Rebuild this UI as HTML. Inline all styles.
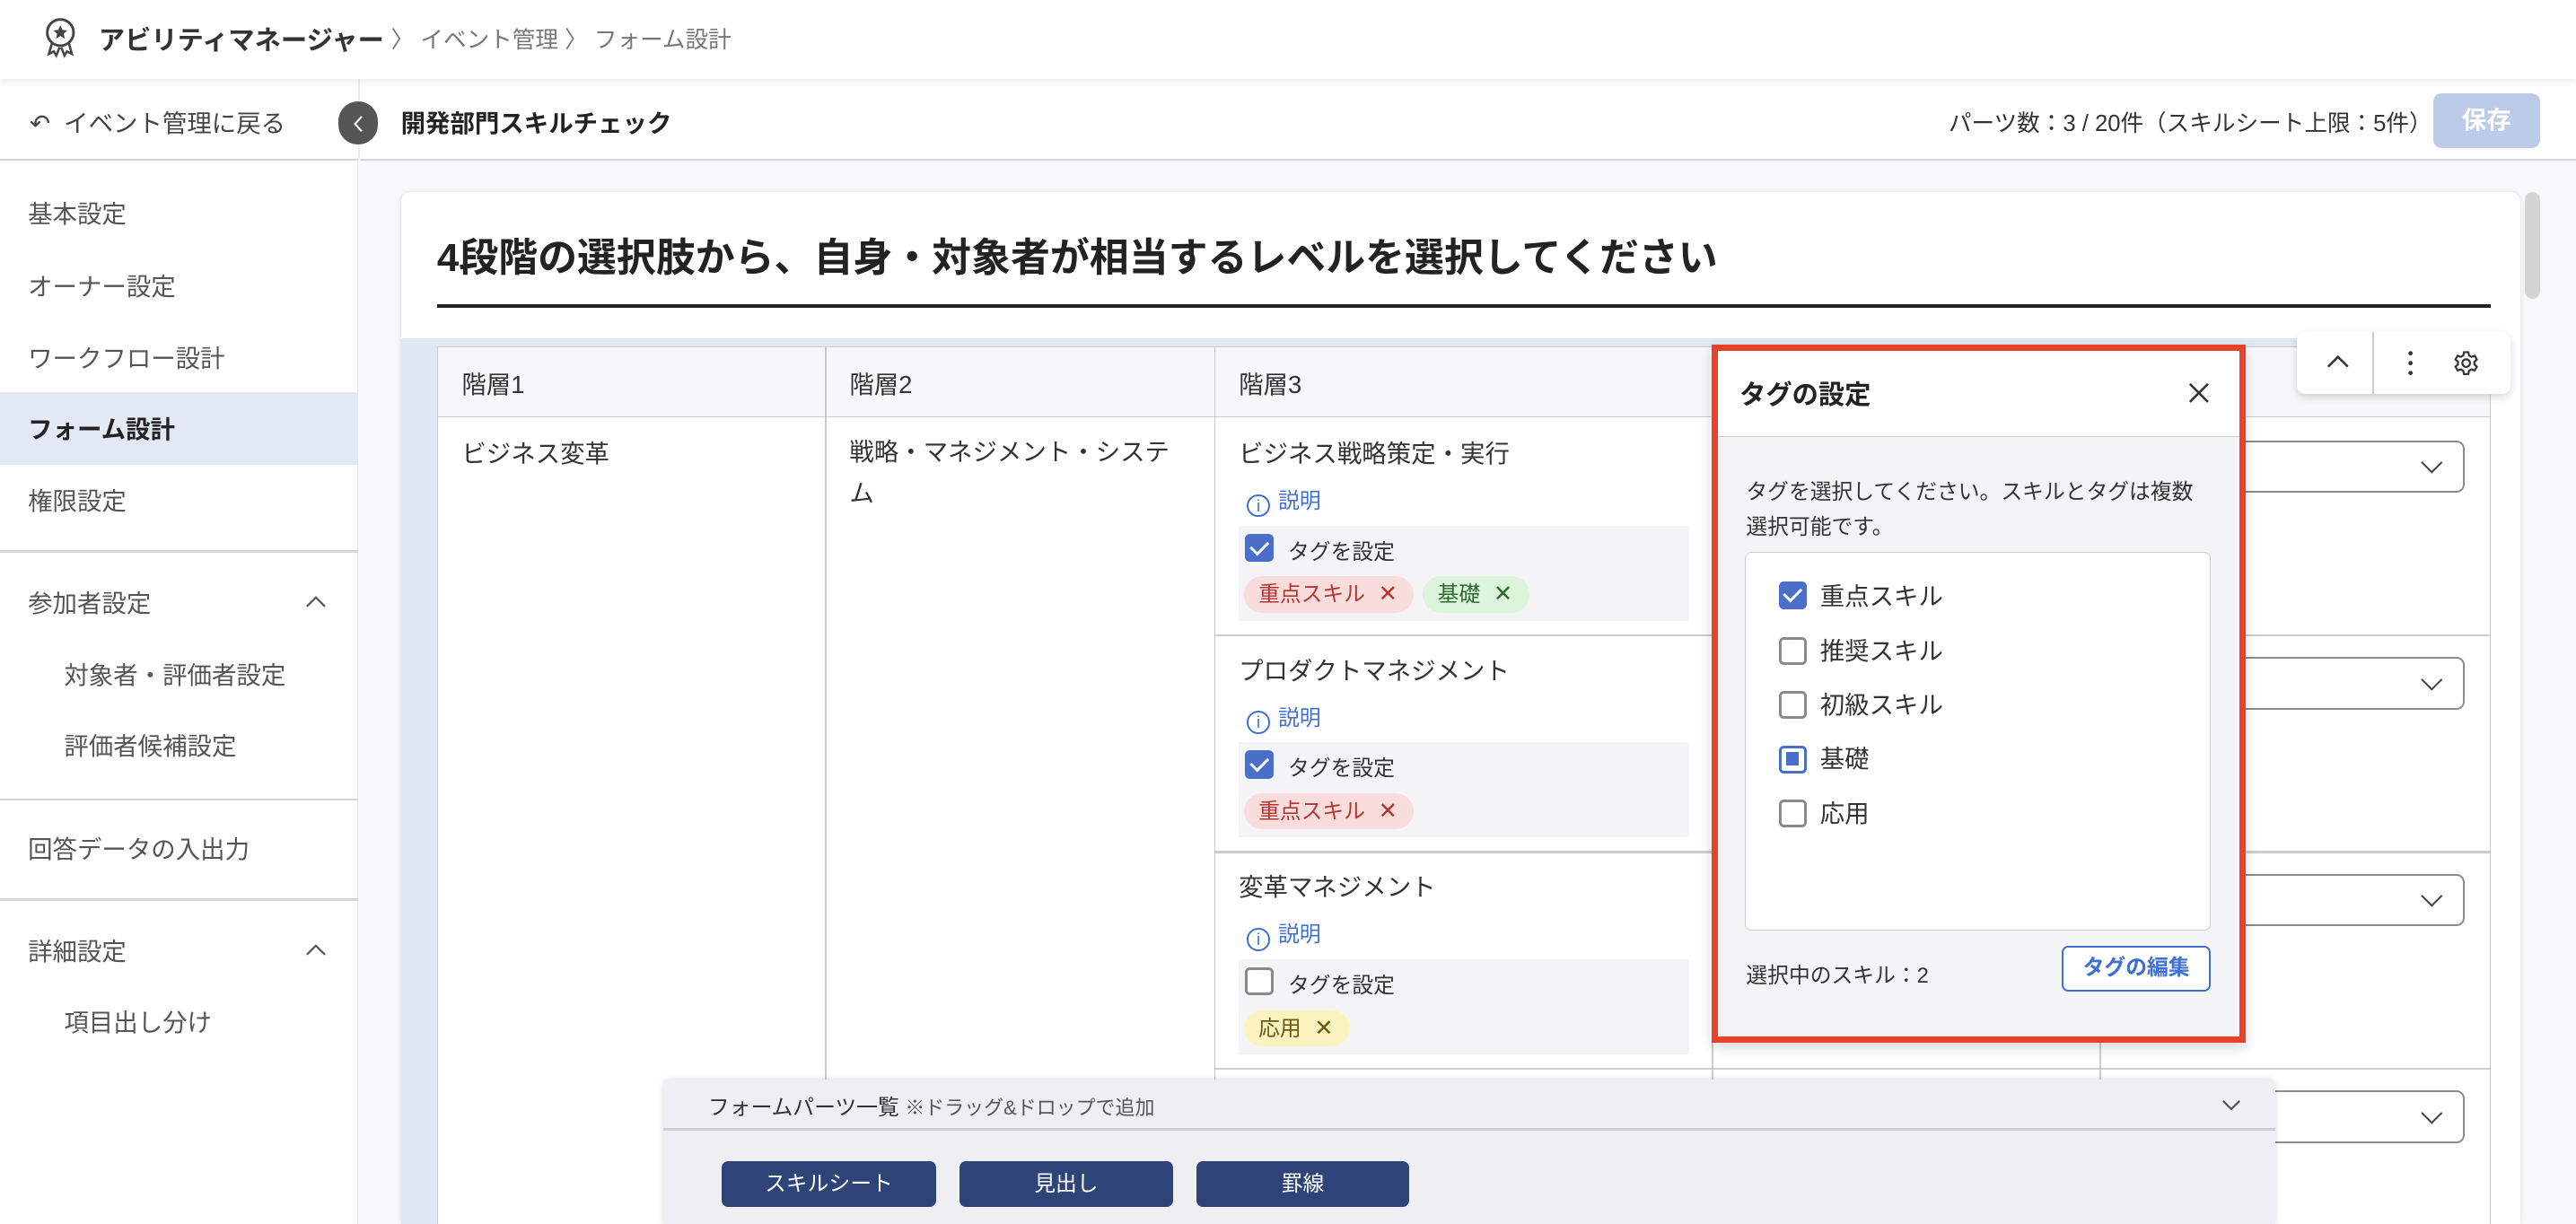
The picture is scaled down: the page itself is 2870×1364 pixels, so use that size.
<!DOCTYPE html>
<html><head><meta charset="utf-8">
<style>
html{zoom:1.8304;overflow:hidden}
*{box-sizing:border-box;margin:0;padding:0}
body{width:1568px;height:745px;overflow:hidden;margin:0;font-family:"Liberation Sans","Noto Sans CJK JP",sans-serif;color:#333}
#w{position:relative;width:1568px;height:745px;overflow:hidden;background:#f7f8fa}
.a{position:absolute;white-space:nowrap}
.hdr{left:0;top:0;width:1568px;height:48px;background:#fff;box-shadow:0 2px 4px rgba(0,0,0,.08);z-index:3}
.bar{left:0;top:48px;width:1568px;height:50px;background:#fff;border-bottom:1.5px solid #d6d6d6;z-index:2}
.side{left:0;top:98px;width:218px;height:647px;background:#fff;border-right:1px solid #e6e6e6}
.side .i{position:absolute;left:17px;font-size:15px;color:#555}
.side .s{left:39px}
.hr{position:absolute;left:0;width:218px;height:1.5px;background:#d6d6d6}
.card{left:244px;top:117px;width:1290px;height:628px;background:#fff;border-radius:6px 6px 0 0;box-shadow:0 0 3px rgba(0,0,0,.12)}
.cb{position:absolute;width:17px;height:17px;border-radius:3px}
.on{background:#4a6fc9}
.on:after{content:"";position:absolute;left:5px;top:2px;width:5px;height:9px;border:solid #fff;border-width:0 2px 2px 0;transform:rotate(45deg)}
.off{border:2px solid #8a8a8a;background:#fff}
.chip{position:absolute;height:22px;border-radius:11px;font-size:13px;line-height:22px;padding:0 10px 0 9px}
.chip b{font-weight:normal;font-size:14px;margin-left:8px}
.t15{font-size:15px;color:#333}
.info{font-size:13px;color:#3f6fd0}
.info i{display:inline-block;width:14px;height:14px;border:1.3px solid #3f6fd0;border-radius:50%;font-style:normal;font-size:10px;line-height:12px;text-align:center;margin-right:5px;vertical-align:-2px}
.dd{position:absolute;left:1290px;width:210px;height:32px;border:1.3px solid #8c8c8c;border-radius:5px;background:#fff}
.dd:after{content:"";position:absolute;right:14px;top:8px;width:8px;height:8px;border:solid #444;border-width:0 1.5px 1.5px 0;transform:rotate(45deg)}
.btn{position:absolute;top:707px;height:28px;background:#2e4479;color:#fff;font-size:13px;line-height:28px;text-align:center;border-radius:4px}
</style></head><body><div id="w">

<div class="a hdr">
  <svg class="a" style="left:27px;top:10px" width="20" height="26" viewBox="0 0 20 26"><circle cx="10" cy="10" r="8" fill="none" stroke="#444" stroke-width="1.6"/><path d="M10 5.5l1.3 2.9 3 .3-2.3 2 .7 3-2.7-1.6-2.7 1.6.7-3-2.3-2 3-.3z" fill="#444"/><path d="M5 16l-2 7 3-1.5 1.5 2.5 2-5M15 16l2 7-3-1.5-1.5 2.5-2-5" fill="none" stroke="#444" stroke-width="1.4"/></svg>
  <div class="a" style="left:60px;top:12px;font-size:16px;font-weight:bold;color:#333">アビリティマネージャー</div>
  <div class="a" style="left:238px;top:13px;font-size:14px;color:#777">〉&nbsp;イベント管理&nbsp;〉&nbsp;フォーム設計</div>
</div>

<div class="a bar">
  <div class="a" style="left:18px;top:15px;font-size:15px;color:#444">↶&nbsp; イベント管理に戻る</div>
  <div class="a" style="left:218px;top:0;width:1px;height:50px;background:#eee"></div>
  <div class="a" style="left:206px;top:14px;width:24px;height:26px;border-radius:12px;background:#555"><svg class="a" style="left:8px;top:8px" width="8" height="11"><path d="M6 1L2 5.5 6 10" fill="none" stroke="#fff" stroke-width="1.2"/></svg></div>
  <div class="a" style="left:244px;top:15px;font-size:15px;font-weight:bold;color:#222">開発部門スキルチェック</div>
  <div class="a" style="left:1186px;top:16px;font-size:14px;color:#333">パーツ数：3 / 20件（スキルシート上限：5件）</div>
  <div class="a" style="left:1481px;top:9px;width:65px;height:33px;border-radius:5px;background:#bccbea;color:#fff;font-weight:bold;font-size:15px;line-height:33px;text-align:center">保存</div>
</div>

<div class="a side">
  <div class="i" style="top:20px">基本設定</div>
  <div class="i" style="top:64px">オーナー設定</div>
  <div class="i" style="top:108px">ワークフロー設計</div>
  <div style="position:absolute;left:0;top:141px;width:218px;height:44px;background:#e3e8f5"></div>
  <div class="i" style="top:151px;font-weight:bold;color:#222">フォーム設計</div>
  <div class="i" style="top:195px">権限設定</div>
  <div class="hr" style="top:237px"></div>
  <div class="i" style="top:257px">参加者設定</div>
  <svg class="a" style="left:186px;top:264px" width="13" height="8"><path d="M1 7l5.5-5.5L12 7" fill="none" stroke="#555" stroke-width="1.2"/></svg>
  <div class="i s" style="top:301px">対象者・評価者設定</div>
  <div class="i s" style="top:344px">評価者候補設定</div>
  <div class="hr" style="top:388px"></div>
  <div class="i" style="top:407px">回答データの入出力</div>
  <div class="hr" style="top:449px"></div>
  <div class="i" style="top:469px">詳細設定</div>
  <svg class="a" style="left:186px;top:476px" width="13" height="8"><path d="M1 7l5.5-5.5L12 7" fill="none" stroke="#555" stroke-width="1.2"/></svg>
  <div class="i s" style="top:512px">項目出し分け</div>
</div>

<div class="a card"></div>
<div class="a" style="left:1537px;top:117px;width:9px;height:65px;border-radius:5px;background:#d4d4d4"></div>
<div class="a" style="left:266px;top:137px;font-size:24px;font-weight:bold;color:#222">4段階の選択肢から、自身・対象者が相当するレベルを選択してください</div>
<div class="a" style="left:266px;top:185px;width:1250px;height:2.5px;background:#222"></div>
<div class="a" style="left:244px;top:206px;width:1272px;height:539px;background:#e1e7f4"></div>

<div class="a" style="left:266px;top:211px;width:1250px;height:534px;background:#fff;border:1px solid #ccc;border-bottom:none"></div>
<div class="a" style="left:266px;top:211px;width:1250px;height:43px;background:#f7f7f9;border:1px solid #ccc"></div>
<div class="a" style="left:502px;top:211px;width:1px;height:534px;background:#ccc"></div>
<div class="a" style="left:739px;top:211px;width:1px;height:534px;background:#ccc"></div>
<div class="a" style="left:1042px;top:211px;width:1px;height:534px;background:#ccc"></div>
<div class="a" style="left:1278px;top:211px;width:1px;height:534px;background:#ccc"></div>
<div class="a" style="left:739px;top:386px;width:777px;height:1.5px;background:#ccc"></div>
<div class="a" style="left:739px;top:518px;width:777px;height:1.5px;background:#ccc"></div>
<div class="a" style="left:739px;top:650px;width:777px;height:1.5px;background:#ccc"></div>
<div class="a t15" style="left:281px;top:222px">階層1</div>
<div class="a t15" style="left:517px;top:222px">階層2</div>
<div class="a t15" style="left:754px;top:222px">階層3</div>
<div class="a t15" style="left:281px;top:264px">ビジネス変革</div>
<div class="a t15" style="left:517px;top:263px;white-space:normal;width:205px;line-height:25px">戦略・マネジメント・システム</div>

<div class="dd" style="top:268px"></div>
<div class="dd" style="top:400px"></div>
<div class="dd" style="top:532px"></div>
<div class="dd" style="top:664px"></div>

<div class="a t15" style="left:754px;top:264px">ビジネス戦略策定・実行</div>
<div class="a info" style="left:759px;top:294px"><i>i</i>説明</div>
<div class="a" style="left:754px;top:320px;width:274px;height:58px;background:#f4f4f6"></div>
<div class="cb on" style="left:758px;top:325px"></div>
<div class="a" style="left:784px;top:325px;font-size:13px">タグを設定</div>
<div class="chip" style="left:757px;top:351px;background:#f9dcdc;color:#b3352e">重点スキル<b>✕</b></div>
<div class="chip" style="left:866px;top:351px;background:#dcf3dc;color:#2d6b2d">基礎<b>✕</b></div>

<div class="a t15" style="left:754px;top:396px">プロダクトマネジメント</div>
<div class="a info" style="left:759px;top:426px"><i>i</i>説明</div>
<div class="a" style="left:754px;top:452px;width:274px;height:58px;background:#f4f4f6"></div>
<div class="cb on" style="left:758px;top:457px"></div>
<div class="a" style="left:784px;top:457px;font-size:13px">タグを設定</div>
<div class="chip" style="left:757px;top:483px;background:#f9dcdc;color:#b3352e">重点スキル<b>✕</b></div>

<div class="a t15" style="left:754px;top:528px">変革マネジメント</div>
<div class="a info" style="left:759px;top:558px"><i>i</i>説明</div>
<div class="a" style="left:754px;top:584px;width:274px;height:58px;background:#f4f4f6"></div>
<div class="cb off" style="left:758px;top:589px"></div>
<div class="a" style="left:784px;top:589px;font-size:13px">タグを設定</div>
<div class="chip" style="left:757px;top:615px;background:#fbf3bf;color:#6a5a10">応用<b>✕</b></div>

<div class="a" style="left:1398px;top:202px;width:130px;height:38px;background:#fff;border-radius:5px;box-shadow:0 2px 5px rgba(0,0,0,.15)">
  <svg class="a" style="left:18px;top:13px" width="14" height="10"><path d="M1 8l6-6 6 6" fill="none" stroke="#333" stroke-width="1.4"/></svg>
  <div class="a" style="left:46px;top:0;width:1px;height:38px;background:#ccc"></div>
  <svg class="a" style="left:67px;top:11px" width="4" height="16"><circle cx="2" cy="2" r="1.3" fill="#333"/><circle cx="2" cy="8" r="1.3" fill="#333"/><circle cx="2" cy="14" r="1.3" fill="#333"/></svg>
  <svg class="a" style="left:95px;top:11px" width="16" height="16" viewBox="0 0 24 24"><circle cx="12" cy="12" r="3.5" fill="none" stroke="#333" stroke-width="1.8"/><path d="M10 2h4l.6 3 2.3 1.3 2.9-1 2 3.4-2.3 2v2.6l2.3 2-2 3.4-2.9-1-2.3 1.3-.6 3h-4l-.6-3-2.3-1.3-2.9 1-2-3.4 2.3-2v-2.6l-2.3-2 2-3.4 2.9 1L9.4 5z" fill="none" stroke="#333" stroke-width="1.8"/></svg>
</div>

<div class="a" style="left:1042px;top:210px;width:325px;height:425px;border:4px solid #e8432a;background:#f4f4f6;box-shadow:0 3px 8px rgba(0,0,0,.15)">
  <div class="a" style="left:0;top:0;width:317px;height:52px;background:#fff;border-bottom:1px solid #ccc"></div>
  <div class="a" style="left:13px;top:14px;font-size:16px;font-weight:bold;color:#222">タグの設定</div>
  <svg class="a" style="left:286px;top:19px" width="13" height="13"><path d="M1 1l11 11M12 1L1 12" stroke="#333" stroke-width="1.4"/></svg>
  <div class="a" style="left:17px;top:76px;font-size:13px;line-height:21px;white-space:normal;width:280px;color:#333">タグを選択してください。スキルとタグは複数選択可能です。</div>
  <div class="a" style="left:16px;top:122px;width:284px;height:231px;background:#fff;border:1px solid #ccc;border-radius:4px"></div>
  <div class="cb on" style="left:37px;top:140px"></div><div class="a t15" style="left:62px;top:137px">重点スキル</div>
  <div class="cb off" style="left:37px;top:174px"></div><div class="a t15" style="left:62px;top:170px">推奨スキル</div>
  <div class="cb off" style="left:37px;top:207px"></div><div class="a t15" style="left:62px;top:203px">初級スキル</div>
  <div class="cb" style="left:37px;top:240px;border:2px solid #4a6fc9;background:#fff"><div style="position:absolute;left:2.5px;top:2.5px;width:8px;height:8px;background:#4a6fc9"></div></div><div class="a t15" style="left:62px;top:236px">基礎</div>
  <div class="cb off" style="left:37px;top:273px"></div><div class="a t15" style="left:62px;top:269px">応用</div>
  <div class="a" style="left:17px;top:369px;font-size:13px">選択中のスキル：2</div>
  <div class="a" style="left:209px;top:362px;width:91px;height:28px;border:1.3px solid #3f6fd0;border-radius:4px;background:#fff;color:#3f6fd0;font-size:13px;font-weight:bold;line-height:25px;text-align:center">タグの編集</div>
</div>

<div class="a" style="left:404px;top:657px;width:981px;height:88px;background:#efeff3;border-radius:4px 4px 0 0;box-shadow:0 0 4px rgba(0,0,0,.15)">
  <div class="a" style="left:0;top:30px;width:981px;height:1.5px;background:#d0d0d0"></div>
  <div class="a" style="left:27px;top:6px;font-size:13px;color:#333">フォームパーツ一覧 <span style="font-size:12px;color:#555">※ドラッグ&amp;ドロップで追加</span></div>
  <svg class="a" style="left:948px;top:12px" width="12" height="8"><path d="M1 1l5 5 5-5" fill="none" stroke="#555" stroke-width="1.2"/></svg>
</div>
<div class="btn" style="left:439px;width:131px">スキルシート</div>
<div class="btn" style="left:584px;width:130px">見出し</div>
<div class="btn" style="left:728px;width:130px">罫線</div>

</div></body></html>
